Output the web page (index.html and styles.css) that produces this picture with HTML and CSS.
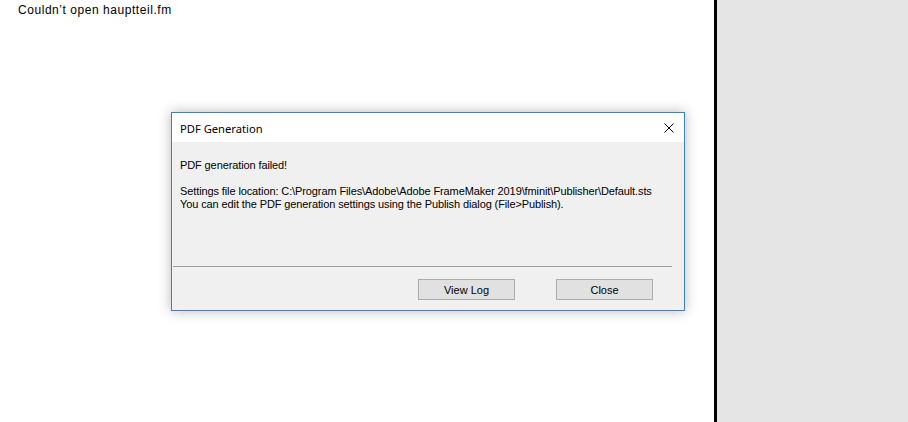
FILE: index.html
```html
<!DOCTYPE html>
<html>
<head>
<meta charset="utf-8">
<link rel="stylesheet" href="styles.css">
</head>
<body>
<div class="screen">
  <div class="main">
    <p class="status">Couldn’t open hauptteil.fm</p>
    <div class="dialog">
      <div class="titlebar">
        <span class="title">PDF Generation</span>
        <svg class="close-x" width="10" height="10" viewBox="0 0 10 10"><path d="M0.5 0.5 L9.5 9.5 M9.5 0.5 L0.5 9.5" stroke="#000" stroke-width="1" fill="none"/></svg>
      </div>
      <div class="body">
        <div class="content">
          <p class="msg">PDF generation failed!</p>
          <p class="msg">Settings file location: C:\Program Files\Adobe\Adobe FrameMaker 2019\fminit\Publisher\Default.sts<br>You can edit the PDF generation settings using the Publish dialog (File&gt;Publish).</p>
        </div>
        <div class="sep"></div>
        <div class="buttons">
          <button class="btn">View Log</button>
          <button class="btn">Close</button>
        </div>
      </div>
    </div>
  </div>
  <div class="divider"></div>
  <div class="side"></div>
</div>
</body>
</html>
```
FILE: styles.css
```css
html, body { margin: 0; padding: 0; }
body { width: 908px; height: 422px; overflow: hidden; background: #fff; }
.screen { display: flex; height: 422px; }
.main { position: relative; width: 714px; background: #fff; }
.divider { width: 3px; background: #000; }
.side { flex: 1; background: #e5e5e5; }
.status {
  margin: 0; padding: 3px 0 0 18px;
  font-family: "Liberation Sans", Arial, sans-serif;
  font-size: 12px; line-height: 14px; color: #000; letter-spacing: 0.55px;
}
.dialog {
  position: absolute; left: 171px; top: 112px;
  width: 512px; height: 197px;
  border: 1px solid #3f7fc4;
  background: #f0f0f0;
  box-shadow: 0 0 12px rgba(0,0,0,0.28);
  display: flex; flex-direction: column;
}
.titlebar {
  height: 29px; background: #fff;
  display: flex; align-items: center; justify-content: space-between;
  padding: 0 10px 0 8px;
}
.title { font-family: "Noto Sans", "Segoe UI", sans-serif; font-size: 11.2px; color: #000; padding-top: 1px; }
.body { flex: 1; display: flex; flex-direction: column; }
.content { padding: 17px 8px 0 8px; height: 124px; box-sizing: border-box; }
.msg {
  margin: 0 0 13px 0;
  font-family: "Liberation Sans", Arial, sans-serif;
  font-size: 11px; line-height: 13px; color: #000; letter-spacing: -0.11px;
}
.sep { height: 1px; background: #a0a0a0; margin: 0 12px 0 1px; }
.buttons { display: flex; justify-content: flex-end; gap: 41px; padding: 12px 31px 0 0; }
.btn {
  width: 97px; height: 21px; margin: 0; padding: 0;
  background: #e1e1e1; border: 1px solid #adadad;
  font-family: "Liberation Sans", Arial, sans-serif; font-size: 11px; color: #000;
}
```
